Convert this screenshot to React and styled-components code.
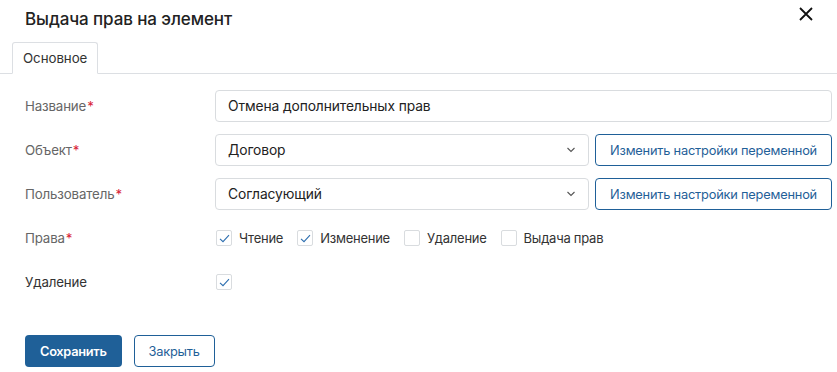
import React from "react";
import styled, { createGlobalStyle } from "styled-components";

const Global = createGlobalStyle`
  html, body { margin: 0; padding: 0; background: #fff; }
  body { font-family: Inter, "Noto Sans", "Liberation Sans", sans-serif; color: #333; }
  * { box-sizing: border-box; }
`;

const Dialog = styled.div`
  width: 837px;
  height: 372px;
  background: #fff;
  position: relative;
`;

const Header = styled.div`
  height: 42px;
  display: flex;
  align-items: center;
  padding: 0 0 4px 25px;
`;

const Title = styled.h1`
  margin: 0;
  font-size: 17px;
  font-weight: 500;
  color: #222;
  letter-spacing: -0.1px;
`;

const Close = styled.button`
  position: absolute;
  top: 5px;
  right: 22px;
  width: 18px;
  height: 18px;
  padding: 0;
  border: 0;
  background: none;
  display: flex;
  align-items: center;
  justify-content: center;
  cursor: pointer;
`;

const Tabs = styled.div`
  display: flex;
  padding-left: 12px;
  border-bottom: 1px solid #dcdfe3;
  height: 32px;
`;

const Tab = styled.div`
  height: 32px;
  padding: 0 10px;
  display: flex;
  align-items: center;
  border: 1px solid #dcdfe3;
  border-bottom: 1px solid #fff;
  border-radius: 3px 3px 0 0;
  font-size: 13.3px;
  letter-spacing: -0.05px;
  color: #333;
  background: #fff;
  margin-bottom: -1px;
`;

const Form = styled.div`
  display: flex;
  flex-direction: column;
  gap: 12px;
  padding: 16px 5px 0 25px;
`;

const Row = styled.div`
  display: flex;
  align-items: center;
  height: 32px;
`;

const Label = styled.div`
  width: 190px;
  flex: none;
  font-size: 13.3px;
  letter-spacing: -0.15px;
  color: ${(p) => (p.$dark ? "#333" : "#666")};
`;

const Req = styled.span`
  color: #d9263a;
  margin-left: 1px;
`;

const Field = styled.div`
  flex: 1;
  display: flex;
  gap: 6px;
  height: 32px;
`;

const Input = styled.div`
  flex: 1;
  height: 32px;
  border: 1px solid #d9dcdf;
  border-radius: 4px;
  display: flex;
  align-items: center;
  padding: 0 12px;
  font-size: 13.8px;
  letter-spacing: -0.1px;
  color: #222;
  justify-content: space-between;
`;

const OutlineBtn = styled.button`
  height: 32px;
  border: 1px solid #1f6098;
  border-radius: 4px;
  background: #fff;
  color: #1f6098;
  font-family: inherit;
  font-size: 12.8px;
  letter-spacing: -0.2px;
  padding: 0 ${(p) => p.$pad || 14}px;
  white-space: nowrap;
  cursor: pointer;
`;

const Checks = styled.div`
  display: flex;
  align-items: center;
  gap: 14px;
  padding-left: 1px;
`;

const Check = styled.label`
  display: flex;
  align-items: center;
  gap: 7px;
  font-size: 13px;
  letter-spacing: -0.25px;
  color: #333;
`;

const Box = styled.span`
  width: 16px;
  height: 16px;
  border: 1px solid #d9dcdf;
  border-radius: 2px;
  display: flex;
  align-items: center;
  justify-content: center;
  background: #fff;
`;

const Footer = styled.div`
  display: flex;
  gap: 12px;
  padding: 37px 0 0 25px;
`;

const PrimaryBtn = styled.button`
  height: 32px;
  border: 0;
  border-radius: 4px;
  background: #1f6098;
  color: #fff;
  font-family: inherit;
  font-size: 12.8px;
  letter-spacing: -0.3px;
  font-weight: 600;
  padding: 0 15px;
  cursor: pointer;
`;

const Tick = () => (
  <svg width="11" height="9" viewBox="0 0 11 9">
    <path d="M1 4.8 L4 7.6 L10 1.2" fill="none" stroke="#2d6fb0" strokeWidth="1.1" />
  </svg>
);

const Chevron = () => (
  <svg width="10" height="6" viewBox="0 0 10 6">
    <path d="M1.5 1 L5 4.5 L8.5 1" fill="none" stroke="#555" strokeWidth="1.1" />
  </svg>
);

const CheckItem = ({ checked, children }) => (
  <Check>
    <Box>{checked && <Tick />}</Box>
    {children}
  </Check>
);

export default function App() {
  return (
    <>
      <Global />
      <Dialog>
        <Header>
          <Title>Выдача прав на элемент</Title>
        </Header>
        <Close aria-label="close">
          <svg width="16" height="16" viewBox="0 0 16 16">
            <path d="M2 2 L14 14 M14 2 L2 14" stroke="#111" strokeWidth="1.8" />
          </svg>
        </Close>
        <Tabs>
          <Tab>Основное</Tab>
        </Tabs>
        <Form>
          <Row>
            <Label>
              Название<Req>*</Req>
            </Label>
            <Field>
              <Input>Отмена дополнительных прав</Input>
            </Field>
          </Row>
          <Row>
            <Label>
              Объект<Req>*</Req>
            </Label>
            <Field>
              <Input>
                Договор
                <Chevron />
              </Input>
              <OutlineBtn>Изменить настройки переменной</OutlineBtn>
            </Field>
          </Row>
          <Row>
            <Label>
              Пользователь<Req>*</Req>
            </Label>
            <Field>
              <Input>
                Согласующий
                <Chevron />
              </Input>
              <OutlineBtn>Изменить настройки переменной</OutlineBtn>
            </Field>
          </Row>
          <Row>
            <Label>
              Права<Req>*</Req>
            </Label>
            <Checks>
              <CheckItem checked>Чтение</CheckItem>
              <CheckItem checked>Изменение</CheckItem>
              <CheckItem>Удаление</CheckItem>
              <CheckItem>Выдача прав</CheckItem>
            </Checks>
          </Row>
          <Row>
            <Label $dark>Удаление</Label>
            <Checks>
              <Box>
                <Tick />
              </Box>
            </Checks>
          </Row>
        </Form>
        <Footer>
          <PrimaryBtn>Сохранить</PrimaryBtn>
          <OutlineBtn $pad={14}>Закрыть</OutlineBtn>
        </Footer>
      </Dialog>
    </>
  );
}
